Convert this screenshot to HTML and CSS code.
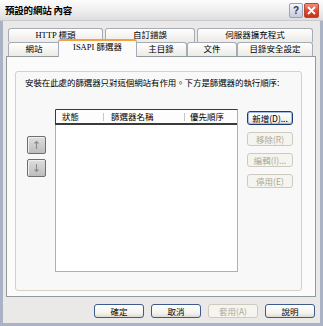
FILE: index.html
```html
<!DOCTYPE html>
<html lang="zh-Hant">
<head>
    <meta charset="UTF-8">
    <title>預設的網站 內容</title>
    <link rel="stylesheet" href="styles.css">
</head>
<body>
    <div class="window">
        <div class="titlebar">
            <span class="title">預設的網站 內容</span>
            <div class="title-buttons">
                <span class="tb-btn help">?</span>
                <span class="tb-btn close">
                    <svg width="9" height="9" viewBox="0 0 9 9"><path d="M1 1 L8 8 M8 1 L1 8" stroke="#fff" stroke-width="1.8"/></svg>
                </span>
            </div>
        </div>

        <div class="dialog">
            <div class="tabs">
                <div class="tab-row back">
                    <div class="tab w95">HTTP 標頭</div>
                    <div class="tab w90">自訂錯誤</div>
                    <div class="tab w116">伺服器擴充程式</div>
                </div>
                <div class="tab-row front">
                    <div class="tab w52">網站</div>
                    <div class="tab w75 selected">ISAPI 篩選器</div>
                    <div class="tab w52">主目錄</div>
                    <div class="tab w50">文件</div>
                    <div class="tab w76">目錄安全設定</div>
                </div>
            </div>

            <div class="panel">
                <div class="group">
                    <p class="desc">安裝在此處的篩選器只對這個網站有作用。下方是篩選器的執行順序:</p>
                    <div class="main">
                        <div class="arrows">
                            <span class="arrow-btn">
                                <svg width="7" height="10" viewBox="0 0 7 10"><path d="M3.5 1.5 V9 M1.5 3.5 L3.5 1.5 L5.5 3.5" stroke="#8c8c8c" stroke-width="1.1" fill="none"/></svg>
                            </span>
                            <span class="arrow-btn">
                                <svg width="7" height="10" viewBox="0 0 7 10"><path d="M3.5 1 V8.5 M1.5 6.5 L3.5 8.5 L5.5 6.5" stroke="#8c8c8c" stroke-width="1.1" fill="none"/></svg>
                            </span>
                        </div>
                        <div class="list">
                            <div class="list-header">
                                <span class="col c1">狀態</span>
                                <span class="col c2">篩選器名稱</span>
                                <span class="col c3">優先順序</span>
                            </div>
                        </div>
                        <div class="side-buttons">
                            <button class="btn default">新增(<u>D</u>)...</button>
                            <button class="btn" disabled>移除(<u>R</u>)</button>
                            <button class="btn" disabled>編輯(<u>I</u>)...</button>
                            <button class="btn" disabled>停用(<u>E</u>)</button>
                        </div>
                    </div>
                </div>
            </div>

            <div class="footer-buttons">
                <button class="btn">確定</button>
                <button class="btn">取消</button>
                <button class="btn" disabled>套用(<u>A</u>)</button>
                <button class="btn">說明</button>
            </div>
        </div>
    </div>
</body>
</html>
```

FILE: styles.css
```css
body {
  margin: 0;
  padding: 0;
  font-family: "Noto Sans CJK TC", "Liberation Sans", sans-serif;
  font-size: 8.5px;
  color: #000;
  background: #fff;
}
.window {
  width: 323px;
  height: 326px;
  box-sizing: border-box;
  background: #ebe8e8;
  border: 3px solid #aab2c6;
  border-top: none;
  display: flex;
  flex-direction: column;
}
/* Title bar */
.titlebar {
  height: 21px;
  margin: 0 -3px;
  padding: 0 4px 0 5px;
  display: flex;
  align-items: center;
  justify-content: space-between;
  background: linear-gradient(#fdfdfd, #ececec 60%, #dedede);
  border-bottom: 1px solid #c9c9cf;
  box-sizing: border-box;
}
.title {
  font-weight: bold;
  font-size: 9.5px;
  letter-spacing: -0.2px;
}
.title-buttons {
  display: flex;
  gap: 1px;
  padding-top: 1px;
}
.tb-btn {
  width: 14px;
  height: 15px;
  box-sizing: border-box;
  border-radius: 2px;
  display: flex;
  align-items: center;
  justify-content: center;
}
.help {
  border: 1px solid #9aa3b8;
  background: linear-gradient(#f4f6fb, #c5cbd9);
  color: #2a3550;
  font-weight: bold;
  font-size: 10px;
  font-family: "Liberation Sans", sans-serif;
}
.close {
  width: 15px;
  border: 1px solid #b04a3a;
  background: linear-gradient(#f2907a, #e0462a 55%, #c83418);
}
/* Dialog */
.dialog {
  padding: 7px 4px 0;
  display: flex;
  flex-direction: column;
}
.tabs {
  padding-left: 1px;
}
.tab-row {
  display: flex;
  height: 14px;
}
.tab-row.back {
  gap: 2px;
}
.tab {
  box-sizing: border-box;
  height: 14px;
  border: 1px solid #a5acb5;
  border-bottom: none;
  border-radius: 3px 3px 0 0;
  background: linear-gradient(#ffffff, #eceae6);
  text-align: center;
  line-height: 13px;
  font-family: "Liberation Serif", "Noto Sans CJK TC", serif;
  white-space: nowrap;
}
.tab.selected {
  position: relative;
  z-index: 2;
  height: 18px;
  margin: -3px -2px -1px;
  background: #fbfbfb;
  border-top: 2px solid #f3a23c;
  line-height: 13px;
}
.w95 { width: 95px; }
.w90 { width: 90px; }
.w116 { width: 116px; }
.w52 { width: 52px; }
.w75 { width: 79px; }
.w50 { width: 50px; }
.w76 { width: 76px; }
/* Panel */
.panel {
  height: 241px;
  box-sizing: border-box;
  margin-left: -1px;
  margin-right: 0;
  border: 1px solid #919b9c;
  background: #fbfbfb;
  padding: 14px 13px 6px 8px;
}
.group {
  height: 220px;
  box-sizing: border-box;
  border: 1px solid #d3d2c6;
  border-radius: 3px;
  background: #f8f8f8;
  padding-top: 5px;
}
.desc {
  margin: 0;
  padding-left: 9px;
  line-height: 11px;
  letter-spacing: -0.1px;
  white-space: nowrap;
}
.main {
  display: flex;
  gap: 9px;
  margin: 21px 0 0 11px;
}
.arrows {
  display: flex;
  flex-direction: column;
  gap: 5px;
  padding-top: 27px;
}
.arrow-btn {
  width: 19px;
  height: 18px;
  box-sizing: border-box;
  border: 1px solid #6e6e6e;
  border-radius: 2px;
  background: linear-gradient(#dedede, #bdbdbd);
  box-shadow: inset 1px 1px 0 #f0f0f0;
  display: flex;
  align-items: center;
  justify-content: center;
}
.list {
  width: 183px;
  height: 163px;
  box-sizing: border-box;
  border: 1px solid #9db2cc;
  border-top: 1px solid #3a3a3a;
  background: #fff;
}
.list-header {
  display: flex;
  height: 15px;
  box-sizing: border-box;
  border-bottom: 2px solid #3a3a3a;
  border-left: 1px solid #3a3a3a;
  margin-left: -1px;
  line-height: 13px;
  background: #fdfdfd;
}
.col {
  box-sizing: border-box;
  padding-left: 6px;
  white-space: nowrap;
}
.c1 { width: 47px; }
.c2 { width: 81px; padding-left: 8px; }
.c3 { flex: 1; }
.c2, .c3 {
  background: linear-gradient(#c8c8c8, #c8c8c8) no-repeat 0 3px / 1px 8px;
}
.side-buttons {
  display: flex;
  flex-direction: column;
  gap: 7px;
  padding-top: 2px;
}
.side-buttons .btn {
  width: 46px;
}
/* Buttons */
.btn {
  width: 50px;
  height: 14px;
  padding: 0;
  box-sizing: border-box;
  font-family: "Noto Sans CJK TC", "Liberation Sans", sans-serif;
  font-size: 8.5px;
  line-height: 11px;
  color: #000;
  border: 1px solid #3c5a8c;
  border-radius: 3px;
  background: linear-gradient(#ffffff, #f2f2ee 70%, #dcdad2);
  white-space: nowrap;
}
.btn u {
  text-decoration: none;
}
.btn.default {
  border-color: #1c3a78;
  box-shadow: inset 0 0 0 1px #a6bde6;
}
.btn:disabled {
  color: #aca899;
  border-color: #cdcbc0;
  background: #f5f4ee;
}
.footer-buttons {
  display: flex;
  justify-content: flex-end;
  gap: 7px;
  margin-top: 7px;
  padding-right: 1px;
}
```
